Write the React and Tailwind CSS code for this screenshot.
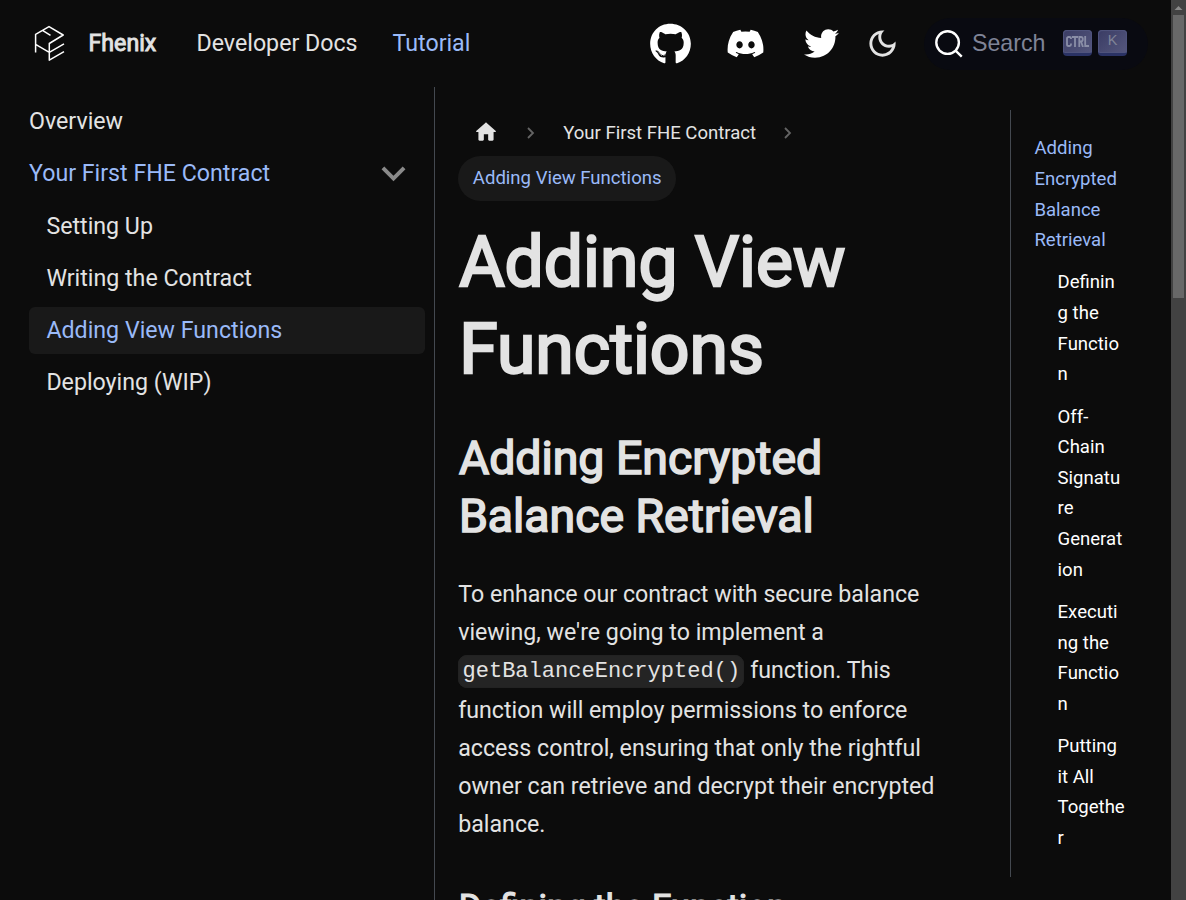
import React from "react";
import { FaGithub, FaDiscord, FaTwitter } from "react-icons/fa";

const link = "text-[#9abaf8]";

function Logo() {
  return (
    <svg className="ml-[33px] -mt-[1px] h-[36px] w-[33px] shrink-0" viewBox="33 25 33 36" fill="none" stroke="#fff" strokeWidth="1.5" strokeLinejoin="round">
      <path d="M35.6 52.5V34.3L49 26.6L63.2 35L49.3 43.5V60.2L64 51.7M42.5 30.3L50.5 35.3M35.6 44.3L49.3 52.3L64 43.8" />
    </svg>
  );
}

function Header() {
  return (
    <header className="flex h-[87px] shrink-0 items-center">
      <Logo />
      <span className="ml-[22.5px] w-[108px] [-webkit-text-stroke:0.9px_#e3e3e3]">Fhenix</span>
      <span className="w-[196px]">Developer Docs</span>
      <span className={`${link} w-[257.5px]`}>Tutorial</span>
      <FaGithub className="h-[42px] w-[41px] text-white" />
      <FaDiscord className="ml-[35px] h-[39px] w-[39px] text-white" />
      <FaTwitter className="ml-[39px] h-[35px] w-[35px] text-white" />
      <svg className="-mt-[1px] ml-[26px] h-[35px] w-[35px]" viewBox="0 0 24 24" fill="#e3e3e3">
        <path d="M9.37,5.51C9.19,6.15,9.1,6.82,9.1,7.5c0,4.08,3.32,7.4,7.4,7.4c0.68,0,1.35-0.09,1.99-0.27C17.45,17.19,14.93,19,12,19 c-3.86,0-7-3.14-7-7C5,9.07,6.81,6.55,9.37,5.51z M12,3c-4.97,0-9,4.03-9,9s4.03,9,9,9s9-4.03,9-9c0-0.46-0.04-0.92-0.1-1.36 c-0.98,1.37-2.58,2.26-4.4,2.26c-2.98,0-5.4-2.42-5.4-5.4c0-1.81,0.89-3.42,2.26-4.4C12.92,3.04,12.46,3,12,3L12,3z" />
      </svg>
      <div className="ml-[24px] flex h-[52px] w-[224px] items-center rounded-full bg-[#090a11] pl-[10px] font-['Liberation_Sans',sans-serif] text-[#7f8497]">
        <svg className="h-[30px] w-[30px]" viewBox="0 0 20 20" fill="none" stroke="#fff" strokeWidth="1.6">
          <path d="M14.386 14.386l4.0877 4.0877-4.0877-4.0877c-2.9418 2.9419-7.7115 2.9419-10.6533 0-2.9419-2.9418-2.9419-7.7115 0-10.6533 2.9418-2.9419 7.7115-2.9419 10.6533 0 2.9419 2.9418 2.9419 7.7115 0 10.6533z" strokeLinecap="round" />
        </svg>
        <span className="ml-[8px] w-[91px]">Search</span>
        <kbd className="-mt-[2px] flex h-[26px] w-[29px] items-center justify-center rounded-[4px] border-b-[3px] border-[#2a3264] bg-linear-135 from-[#3a3c64] to-[#55577d] shadow-[inset_0_0_1px_1px_#50557e]">
          <svg className="h-[11px] w-[23px]" viewBox="0 0 23 11" fill="none" stroke="#8a8ea7" strokeWidth="1.8">
            <path d="M5 3V2.2Q5 1 3.4 1H2.6Q1 1 1 2.6V8.4Q1 10 2.6 10H3.4Q5 10 5 8.5V7.5M6 1H12M9 1V11M13.3 11V1H15Q16.8 1 16.8 3Q16.8 5.5 15 5.5H13.3M15 5.5L17 11M19.2 0V10H23" />
          </svg>
        </kbd>
        <kbd className="-mt-[2px] ml-[6px] flex h-[26px] w-[29px] items-center justify-center rounded-[4px] border-b-[3px] border-[#2a3264] bg-linear-135 from-[#3a3c64] to-[#55577d] font-['Liberation_Sans',sans-serif] text-[14.5px] shadow-[inset_0_0_1px_1px_#50557e]">K</kbd>
      </div>
    </header>
  );
}

function Sidebar() {
  const row = "flex h-[47px] items-center rounded-[5.8px] pl-[17.4px] mt-[5.2px]";
  return (
    <nav className="w-[435px] shrink-0 border-r border-[#444950] pt-[11px] pl-[29px] pr-[9px]">
      <div className="flex h-[47px] items-center">Overview</div>
      <div className={`${link} mt-[4.7px] mb-[5.7px] flex h-[47px] items-center justify-between pr-[17px]`}>
        <span>Your First FHE Contract</span>
        <svg className="h-[29px] w-[29px]" viewBox="0 0 24 24" fill="#8a8a8a">
          <path d="M4.4 6.2L12 13.8L19.6 6.2L21.9 8.5L12 18.4L2.1 8.5Z" />
        </svg>
      </div>
      <div className={row}>Setting Up</div>
      <div className={row}>Writing the Contract</div>
      <div className={`${row} ${link} bg-[#191919]`}>Adding View Functions</div>
      <div className={row}>Deploying (WIP)</div>
    </nav>
  );
}

function Chevron() {
  return (
    <svg className="h-[12px] w-[8px]" viewBox="0 0 8 12" fill="none" stroke="#646464" strokeWidth="1.8">
      <path d="M1 1L6 6L1 11" />
    </svg>
  );
}

function Article() {
  return (
    <main className="w-[575px] shrink-0 pl-[23.2px]">
      <div className="mt-[23px] flex h-[45px] items-center text-[18.56px]">
        <svg className="-mt-[1px] ml-[15px] h-[26px] w-[26px]" viewBox="0 0 24 24" fill="#e3e3e3">
          <path d="M10 19v-5h4v5c0 .55.45 1 1 1h3c.55 0 1-.45 1-1v-7h1.700c.460 0 .680-.570.330-.870L12.670 3.600c-.380-.340-.960-.340-1.340 0l-8.360 7.530c-.340.300-.130.870.330.870H5v7c0 .550.450 1 1 1h3c.550 0 1-.450 1-1z" />
        </svg>
        <span className="ml-[28px] flex"><Chevron /></span>
        <span className="mt-[1px] ml-[28px]">Your First FHE Contract</span>
        <span className="ml-[28px] flex"><Chevron /></span>
      </div>
      <div className={`${link} mt-[1px] flex h-[45px] w-[218px] items-center justify-center rounded-full bg-[#191919] text-[18.56px]`}>Adding View Functions</div>
      <h1 className="mt-[18px] pl-[1px] text-[69.6px] leading-[87px] [-webkit-text-stroke:2.4px_#e3e3e3]">Adding View<br />Functions</h1>
      <h2 className="mt-[36px] pl-[0.7px] text-[46.4px] leading-[58px] [-webkit-text-stroke:1.6px_#e3e3e3]">Adding Encrypted<br />Balance Retrieval</h2>
      <p className="mt-[29.5px] leading-[38.28px] whitespace-nowrap">
        To enhance our contract with secure balance<br />
        viewing, we're going to implement a<br />
        <code className="rounded-[9px] border-[1.6px] border-[#222] bg-[#242424] px-[3.3px] py-[2.8px] align-middle font-['Liberation_Mono',monospace] text-[22.04px] leading-none">getBalanceEncrypted()</code> function. This<br />
        <span className="mt-[1.2px] block">
          function will employ permissions to enforce<br />
          access control, ensuring that only the rightful<br />
          owner can retrieve and decrypt their encrypted<br />
          balance.
        </span>
      </p>
      <h3 className="mt-[42.3px] pl-[0.5px] text-[34.8px] leading-[43.5px] [-webkit-text-stroke:1.2px_#e3e3e3]">Defining the Function</h3>
    </main>
  );
}

function Toc() {
  const items = ["Defining the Function", "Off-Chain Signature Generation", "Executing the Function", "Putting it All Together"];
  return (
    <aside className="mt-[23px] h-[767px] w-[118px] shrink-0 border-l border-[#444950] pt-[23.4px] pl-[23.4px] text-[18.56px] leading-[30.62px]">
      <div className={link}>Adding Encrypted Balance Retrieval</div>
      <ul className="pl-[23.2px] text-white">
        {items.map((t) => (
          <li key={t} className="mt-[11.6px] w-[67.3px] wrap-break-word">{t}</li>
        ))}
      </ul>
    </aside>
  );
}

export default function App() {
  return (
    <div className="flex h-[900px] w-[1186px] overflow-hidden bg-[#0c0c0c] font-[Roboto,sans-serif] text-[23.2px] leading-[1.65] text-[#e3e3e3]">
      <div className="flex w-[1171px] shrink-0 flex-col">
        <Header />
        <div className="flex h-[813px] overflow-hidden">
          <Sidebar />
          <Article />
          <Toc />
        </div>
      </div>
      <div className="flex w-[15px] flex-col items-center bg-[#424242]">
        <svg className="h-[15px] w-[15px]" viewBox="0 0 15 15" fill="#8a8a8a"><path d="M3.500 10L7.500 6L11.500 10Z" /></svg>
        <div className="h-[283px] w-[11px] bg-[#686868]" />
      </div>
    </div>
  );
}
